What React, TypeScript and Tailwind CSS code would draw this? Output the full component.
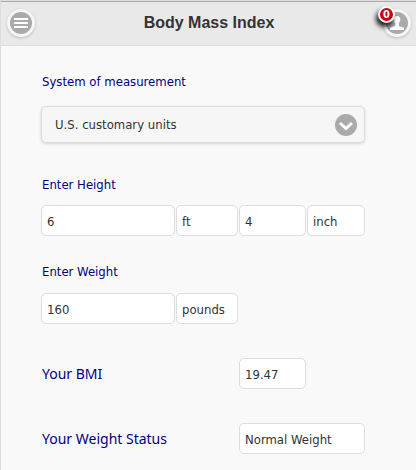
import { useState } from 'react'
import type { ReactNode } from 'react'

interface TextFieldProps {
  label: string
  id?: string
  value: string
  onChange?: (value: string) => void
  className?: string
}

function TextField({ label, id, value, onChange, className = '' }: TextFieldProps) {
  return (
    <input
      id={id}
      type="text"
      aria-label={id ? undefined : label}
      value={value}
      readOnly={!onChange}
      onChange={(e) => onChange?.(e.target.value)}
      className={`h-[31px] w-full min-w-0 rounded-[5px] border border-[#ddd] bg-white px-[5px] pt-0.5 text-[13px] text-[#333] ${className}`}
    />
  )
}

function ResultLabel({ htmlFor, children }: { htmlFor: string; children: ReactNode }) {
  return (
    <label htmlFor={htmlFor} className="col-span-2 col-start-1 px-px font-['Noto_Sans','Open_Sans',sans-serif] text-sm">
      {children}
    </label>
  )
}

function RoundButton({ label, children }: { label: string; children: ReactNode }) {
  return (
    <button
      type="button"
      aria-label={label}
      className="flex size-7 items-center justify-center rounded-full bg-[#f6f6f6] shadow-[0_1px_3px_rgba(0,0,0,0.2)]"
    >
      {children}
    </button>
  )
}

function MenuIcon() {
  return (
    <svg viewBox="0 0 22 22" className="size-[22px]" aria-hidden="true">
      <circle cx="11" cy="11" r="11" fill="#aaa" />
      <path d="M4 7h14M4 11h14M4 15h14" stroke="#fff" strokeWidth="2" />
    </svg>
  )
}

function UserIcon() {
  return (
    <svg viewBox="0 0 22 22" className="size-[22px]" aria-hidden="true">
      <circle cx="11" cy="11" r="11" fill="#aaa" />
      <path
        d="M11 4C8.800 4 7.600 5.500 7.700 7.600c.1 1.700.8 3 1.600 3.800v1.800c0 .6-.4.900-1 1.100L5.200 15.200C4.400 15.500 4 16 4 16.800V18h14v-1.200c0-.8-.4-1.300-1.200-1.600l-3.100-.9c-.6-.2-1-.5-1-1.100v-1.800c.8-.8 1.500-2.100 1.600-3.800C14.400 5.500 13.200 4 11 4z"
        fill="#fff"
      />
    </svg>
  )
}

function ChevronIcon() {
  return (
    <svg viewBox="0 0 22 22" className="size-[22px]" aria-hidden="true">
      <circle cx="11" cy="11" r="11" fill="#aaa" />
      <path d="M5 9l6 5.500 6-5.500" fill="none" stroke="#fff" strokeWidth="3" />
    </svg>
  )
}

const UNITS = ['U.S. customary units', 'Metric units']

export default function App() {
  const [units, setUnits] = useState(UNITS[0])
  const [feet, setFeet] = useState('6')
  const [inches, setInches] = useState('4')
  const [weight, setWeight] = useState('160')

  return (
    <div className="min-h-screen border-l border-[#ddd] bg-[#f9f9f9] font-['DejaVu_Sans_Condensed','DejaVu_Sans',sans-serif] text-[13px] leading-5 text-[#000080]">
      <header className="flex h-[46px] items-center justify-between border-b border-[#ddd] bg-[#e9e9e9] pr-[5px] pl-[6px] shadow-[inset_0_1px_0_#ddd,inset_0_2px_0_#aaa]">
        <RoundButton label="Menu">
          <MenuIcon />
        </RoundButton>
        <h1 className="font-['Liberation_Sans',Arial,sans-serif] text-base font-bold text-[#333]">Body Mass Index</h1>
        <div className="relative">
          <RoundButton label="Account">
            <UserIcon />
          </RoundButton>
          <span className="absolute -top-[3px] -left-[5px] flex size-[17px] items-center justify-center rounded-full border-2 border-white bg-[#c8000f] font-['DejaVu_Sans_Condensed','DejaVu_Sans',sans-serif] text-[11px] leading-none font-bold text-white shadow-[-2px_4px_5px_rgba(0,0,0,0.9)]">
            0
          </span>
        </div>
      </header>

      <main className="pt-[26px] pr-[51px] pb-4 pl-10">
        <label htmlFor="units" className="block px-px">System of measurement</label>
        <div className="relative mt-[14px]">
          <select
            id="units"
            value={units}
            onChange={(e) => setUnits(e.target.value)}
            className="block h-[37px] w-full appearance-none rounded-[5px] border border-[#ddd] bg-[#f6f6f6] pr-10 pl-[13px] text-[13px] text-[#333] shadow-[0_1px_3px_rgba(0,0,0,0.15)]"
          >
            {UNITS.map((unit) => (
              <option key={unit}>{unit}</option>
            ))}
          </select>
          <span className="pointer-events-none absolute inset-y-0 right-2 flex items-center">
            <ChevronIcon />
          </span>
        </div>

        {/* Height */}
        <label htmlFor="feet" className="mt-8 block px-px">Enter Height</label>
        <div className="mt-[10px] grid grid-cols-[134fr_62fr_67fr_58fr] gap-px">
          <TextField id="feet" label="Height" value={feet} onChange={setFeet} />
          <TextField label="Feet unit" value="ft" />
          <TextField label="Inches" value={inches} onChange={setInches} />
          <TextField label="Inches unit" value="inch" />
        </div>

        {/* Weight */}
        <label htmlFor="weight" className="mt-[26px] block px-px">Enter Weight</label>
        <div className="mt-[11px] grid grid-cols-[134fr_62fr_67fr_58fr] gap-px">
          <TextField id="weight" label="Weight" value={weight} onChange={setWeight} />
          <TextField label="Weight unit" value="pounds" />
        </div>

        {/* Results */}
        <div className="mt-[34px] grid grid-cols-[134fr_62fr_67fr_58fr] items-center gap-x-px gap-y-[34px]">
          <ResultLabel htmlFor="bmi">Your BMI</ResultLabel>
          <TextField id="bmi" label="Your BMI" value="19.47" />
          <ResultLabel htmlFor="status">Your Weight Status</ResultLabel>
          <TextField id="status" label="Your Weight Status" value="Normal Weight" className="col-span-2" />
        </div>
      </main>
    </div>
  )
}
